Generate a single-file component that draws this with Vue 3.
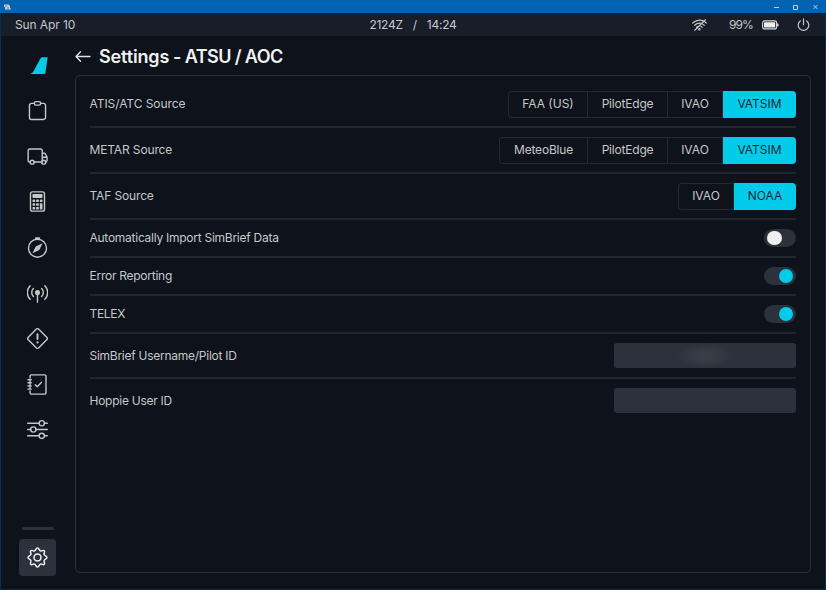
<script setup>
import { ref } from 'vue'

const rows = ref([
  { label: 'ATIS/ATC Source', tracking: -0.06, type: 'select', value: 'VATSIM', options: [['FAA (US)', 79], ['PilotEdge', 80], ['IVAO', 55], ['VATSIM', 73]] },
  { label: 'METAR Source', tracking: -0.14, type: 'select', value: 'VATSIM', options: [['MeteoBlue', 88], ['PilotEdge', 80], ['IVAO', 55], ['VATSIM', 73]] },
  { label: 'TAF Source', tracking: -0.14, type: 'select', value: 'NOAA', options: [['IVAO', 55], ['NOAA', 62]] },
  { label: 'Automatically Import SimBrief Data', tracking: -0.26, type: 'toggle', value: false },
  { label: 'Error Reporting', tracking: -0.26, type: 'toggle', value: true },
  { label: 'TELEX', tracking: -0.3, type: 'toggle', value: true },
  { label: 'SimBrief Username/Pilot ID', tracking: -0.26, type: 'input', hidden: true },
  { label: 'Hoppie User ID', tracking: -0.26, type: 'input', hidden: false },
])
</script>

<template>
  <div class="window">
    <header class="titlebar">
      <svg class="app-icon" width="8" height="6" viewBox="0 0 8 6"><path d="M0 0.500h5v1h1v3h1v1H1V3H0z" fill="#c9cfca" /><path d="M1 2h2M3 4h2" stroke="#53605a" stroke-width=".8" /></svg>
      <svg class="controls" width="46" height="6" viewBox="0 0 46 6" fill="none" stroke="#b8cfe4" stroke-width="1">
        <path d="M0 3.500h5M19.500 1.500h4v4h-4zM39.500 1l4 4M43.500 1l-4 4" />
      </svg>
    </header>

    <div class="status">
      <span class="date">Sun Apr 10</span>
      <span class="clock"><span>2124Z</span><span>/</span><span>14:24</span></span>
      <div class="status-right">
        <svg class="wifi" width="15" height="12" viewBox="0 0 15 12" fill="none" stroke="#c5c8c9" stroke-width="1.200" stroke-linecap="round">
          <path d="M.7 4C4.200.9 8.500.6 11.400 1.900M2.600 6.200c1.900-1.700 4.400-2.300 6.700-1.800M4.600 8.300c.8-.7 1.700-1 2.500-1.100M13 3l1.200 1M10.800 5.300l1.500.9M9 7.500l1.300.8M2.800 11.200L13.500.8" />
          <circle cx="7.400" cy="10.200" r=".6" fill="#c5c8c9" />
        </svg>
        <span class="percent">99%</span>
        <svg class="battery" width="17" height="10" viewBox="0 0 17 10">
          <rect x=".6" y=".9" width="14" height="8" rx="2" fill="none" stroke="#d5d7d7" stroke-width="1.100" />
          <rect x="2" y="2.300" width="11.200" height="5.200" rx=".6" fill="#eceeee" />
          <path d="M15 3.200q1.700.2 1.700 1.700T15 6.600z" fill="#d5d7d7" />
        </svg>
        <svg class="power" width="14" height="14" viewBox="0 0 14 14" fill="none" stroke="#c5c8c9" stroke-width="1.200" stroke-linecap="round">
          <path d="M6.500 .9v5.800M3.300 2.900a5.300 5.300 0 1 0 6.400 0" />
        </svg>
      </div>
    </div>

    <div class="body">
      <nav class="side">
        <a class="item"><svg viewBox="0 0 24 24"><path d="M23.500 2.500h-6.200q-1.500.4-2.300 2L7.500 18.500Q6.200 20.800 3.200 21.700h16.600q1 0 1.200-1z" fill="#00cbe9" /></svg></a>
        <a class="item">
          <svg viewBox="0 0 24 24" class="line"><path d="M8.500 3.800H5A2.200 2.200 0 0 0 2.800 6v14A2.200 2.200 0 0 0 5 22.200h14a2.200 2.200 0 0 0 2.200-2.200V6A2.200 2.200 0 0 0 19 3.800h-3.500" /><rect x="8.500" y="1.800" width="7" height="4" rx="1.400" /></svg>
        </a>
        <a class="item">
          <svg viewBox="0 0 24 24" class="line"><path d="M3.500 18.200A1.700 1.700 0 0 1 1.300 16.500V5.200A1.700 1.700 0 0 1 3 3.500h12.700A1.700 1.700 0 0 1 17.400 5.200v13M8 18.200h8.500M17.400 8.200h2.300q.7 0 1.100.6l1.700 3.200q.4.600.4 1.200v3.500q0 1.500-1.400 1.500M17.400 12.900h5.200" /><circle cx="5.900" cy="18.500" r="2.200" /><circle cx="19.100" cy="18.500" r="2.200" /></svg>
        </a>
        <a class="item">
          <svg viewBox="0 0 24 24" class="line"><rect x="4" y="1" width="16" height="22" rx="2.200" /><g fill="#c5c8c9" stroke="none"><rect x="6.300" y="3.500" width="11.400" height="4.600" rx=".5" /><rect x="6.300" y="9.800" width="3.100" height="2.900" rx=".5" /><rect x="10.450" y="9.800" width="3.100" height="2.900" rx=".5" /><rect x="14.600" y="9.800" width="3.100" height="2.900" rx=".5" /><rect x="6.300" y="14" width="3.100" height="2.900" rx=".5" /><rect x="10.450" y="14" width="3.100" height="2.900" rx=".5" /><rect x="6.300" y="18.200" width="3.100" height="2.900" rx=".5" /><rect x="10.450" y="18.200" width="3.100" height="2.900" rx=".5" /><rect x="14.600" y="14" width="3.100" height="7.100" rx=".5" /></g></svg>
        </a>
        <a class="item">
          <svg viewBox="0 0 24 24" class="line"><circle cx="12" cy="12.800" r="10.300" /><path d="M10.200 1.500h3.600" stroke-width="2.400" /><path d="M17.800 7l-3.800 7.800-7.800 3.800 3.800-7.800z" fill="#c5c8c9" stroke="none" /></svg>
        </a>
        <a class="item">
          <svg viewBox="0 0 24 24" class="line"><path d="M3.600 4.200a11 11 0 0 0 0 15.600M20.400 4.200a11 11 0 0 1 0 15.600M7.300 7.400a6.500 6.500 0 0 0 0 9.200M16.700 7.400a6.500 6.500 0 0 1 0 9.200M12 12v11" /><circle cx="12" cy="12" r="2.900" fill="#c5c8c9" stroke="none" /></svg>
        </a>
        <a class="item">
          <svg viewBox="0 0 24 24" class="line"><path d="M10.800 1.200Q12 .2 13.200 1.200L22.800 10.800Q23.800 12 22.800 13.200L13.200 22.800Q12 23.800 10.800 22.800L1.200 13.200Q.2 12 1.200 10.800z" /><path d="M12 7v5.700" stroke-width="2.200" /><circle cx="12" cy="16.500" r="1.300" fill="#c5c8c9" stroke="none" /></svg>
        </a>
        <a class="item">
          <svg viewBox="0 0 24 24" class="line"><path d="M3.500 4.500V2.700A1.700 1.700 0 0 1 5.200 1h14.800a1.700 1.700 0 0 1 1.700 1.700v18.600A1.700 1.700 0 0 1 20 23H5.200a1.700 1.700 0 0 1-1.700-1.700V19.500M3.500 8v.5M3.500 11.500v1M3.500 15.500v.5M1.100 6.500h3.700M1.100 10h3.700M1.100 13.700h3.700M1.100 17.300h3.700M9.400 12.300l2.300 2.300 4.700-4.800" /></svg>
        </a>
        <a class="item">
          <svg viewBox="0 0 24 24" class="line"><path d="M.8 4.800h13M20 4.800h3.200M.8 12h3.300M10.200 12h13M.8 19.200h13M20 19.200h3.200" /><circle cx="16.900" cy="4.800" r="3" /><circle cx="7.200" cy="12" r="3" /><circle cx="16.900" cy="19.200" r="3" /></svg>
        </a>
        <div class="spacer"></div>
        <div class="bar"></div>
        <a class="item active">
          <svg viewBox="0 0 24 24" class="line"><path d="M12 1.200C14.200 1.200 13.500 4 15.600 4.500 17.500 5 18.200 2.900 19.700 4.300 21.200 5.800 19 6.600 19.500 8.400 20 10.500 22.800 9.800 22.800 12S20 13.500 19.500 15.600C19 17.400 21.200 18.200 19.700 19.700 18.200 21.200 17.500 19 15.600 19.500 13.500 20 14.200 22.800 12 22.800S10.500 20 8.400 19.500C6.500 19 5.800 21.200 4.300 19.700 2.800 18.200 5 17.400 4.500 15.600 4 13.500 1.200 14.200 1.200 12S4 10.500 4.500 8.400C5 6.600 2.800 5.800 4.300 4.300 5.800 2.900 6.500 5 8.400 4.500 10.500 4 9.800 1.200 12 1.200z" /><circle cx="12" cy="12" r="4" /></svg>
        </a>
      </nav>

      <main>
        <h1>
          <svg width="16" height="12" viewBox="0 0 16 12" fill="none" stroke="#e2e4e4" stroke-width="1.300" stroke-linecap="round" stroke-linejoin="round"><path d="M15 5.500H1M5.500 .8L1 5.500l4.500 4.700" /></svg>
          <span><span class="lead">Settings</span> - ATSU / AOC</span>
        </h1>
        <section class="panel">
          <div v-for="row in rows" :key="row.label" class="row" :class="row.type">
            <span class="label" :style="{ letterSpacing: row.tracking + 'px' }">{{ row.label }}</span>
            <div v-if="row.type === 'select'" class="group">
              <button v-for="[name, width] in row.options" :key="name" :class="{ on: name === row.value, mixed: /[a-z]/.test(name) }" :style="{ width: width + 'px' }" @click="row.value = name">{{ name }}</button>
            </div>
            <button v-else-if="row.type === 'toggle'" class="switch" :class="{ on: row.value }" @click="row.value = !row.value"><i></i></button>
            <div v-else class="field"><span v-if="row.hidden" class="masked"></span></div>
          </div>
        </section>
      </main>
    </div>
  </div>
</template>

<style>
body { background: #0e131c; overflow: hidden; }
</style>

<style scoped>
* { box-sizing: border-box; }
.window {
  width: 826px; height: 590px;
  display: flex; flex-direction: column;
  background: #0d121b;
  color: #c5c8c9;
  font: 400 12px/16px Inter, sans-serif;
}
.titlebar {
  height: 13px; flex: none;
  display: flex; align-items: center; justify-content: space-between;
  padding: 0 6px 0 4px;
  background: #0063b1;
}
.status {
  height: 23px; flex: none;
  display: grid; grid-template-columns: 1fr auto 1fr; align-items: center;
  padding: 1px 14px 0 14px;
  background: #171e29;
  border-left: 1px solid #073154;
  border-right: 1px solid #073154;
}
.date { letter-spacing: -0.100px; }
.clock { display: flex; gap: 10px; letter-spacing: -0.250px; }
.status-right { display: flex; align-items: center; justify-content: flex-end; }
.percent { margin: 0 9px 0 22px; letter-spacing: -0.850px; white-space: nowrap; }
.power { margin-left: 18px; }
.body {
  flex: 1; min-height: 0; display: flex;
  border: 1px solid #073154; border-top: 0;
}
.side {
  width: 73px; margin-right: 1px; display: flex; flex-direction: column; align-items: center;
  padding: 11px 0 13px;
}
.item { display: flex; align-items: center; justify-content: center; height: 36px; width: 37px; margin-bottom: 9.600px; flex: none; }
.item svg { width: 21px; height: 21px; }
.line { fill: none; stroke: #c5c8c9; stroke-width: 1.600; stroke-linecap: round; stroke-linejoin: round; }
.spacer { flex: 1; }
.bar { width: 32px; height: 3.500px; border-radius: 2px; background: #2b323c; margin-bottom: 9px; }
.active { height: 37px; margin: 0; border-radius: 4px; background: #2b323c; }
.active .line { stroke: #f1f3f3; stroke-width: 1.700; }
main { flex: 1; display: flex; flex-direction: column; padding: 0 14px 16px 0; }
h1 {
  height: 39px; flex: none; margin: 0; padding: 2px 0 0;
  display: flex; align-items: center; gap: 8px;
  color: #f0f2f2;
  font: 600 18px/24px Inter, sans-serif;
  letter-spacing: -0.600px;
}
.lead { letter-spacing: -0.150px; }
.panel {
  flex: 1; border: 1px solid #2a313c; border-radius: 5px;
  padding: 6px 14px 0;
}
.row {
  display: flex; align-items: center; justify-content: space-between;
  height: 46px;
  border-bottom: 2px solid #202731;
}
.toggle { height: 38px; }
.input { height: 45px; }
.row:last-child { border-bottom-color: transparent; }
.label { white-space: nowrap; margin-left: -0.500px; }
.group { display: flex; height: 27px; border: 1px solid #222a34; border-right: 0; border-radius: 4px; }
.group button {
  margin: 0; padding: 0; border: 0; border-right: 1px solid #222a34;
  background: none; color: inherit; font: inherit;
}
.group button.mixed { letter-spacing: -0.200px; }
.group button.on { margin: -1px 0; border: 0; background: #00cbe9; color: #0e2c3b; border-radius: 0 4px 4px 0; }
.switch { width: 32px; height: 18.500px; padding: 0 3px; border: 0; border-radius: 10px; background: #2b323c; display: flex; align-items: center; }
.switch i { width: 14.500px; height: 14.500px; border-radius: 50%; background: #f0f0ee; }
.switch.on { justify-content: flex-end; }
.switch.on i { background: #00cbe9; }
.field { width: 182px; height: 25.500px; border-radius: 3px; background: #2b323c; display: flex; justify-content: center; }
.masked { width: 56px; background: radial-gradient(ellipse closest-side, #3b3d46, #343a43 55%, rgba(43, 50, 60, 0)); }
</style>
